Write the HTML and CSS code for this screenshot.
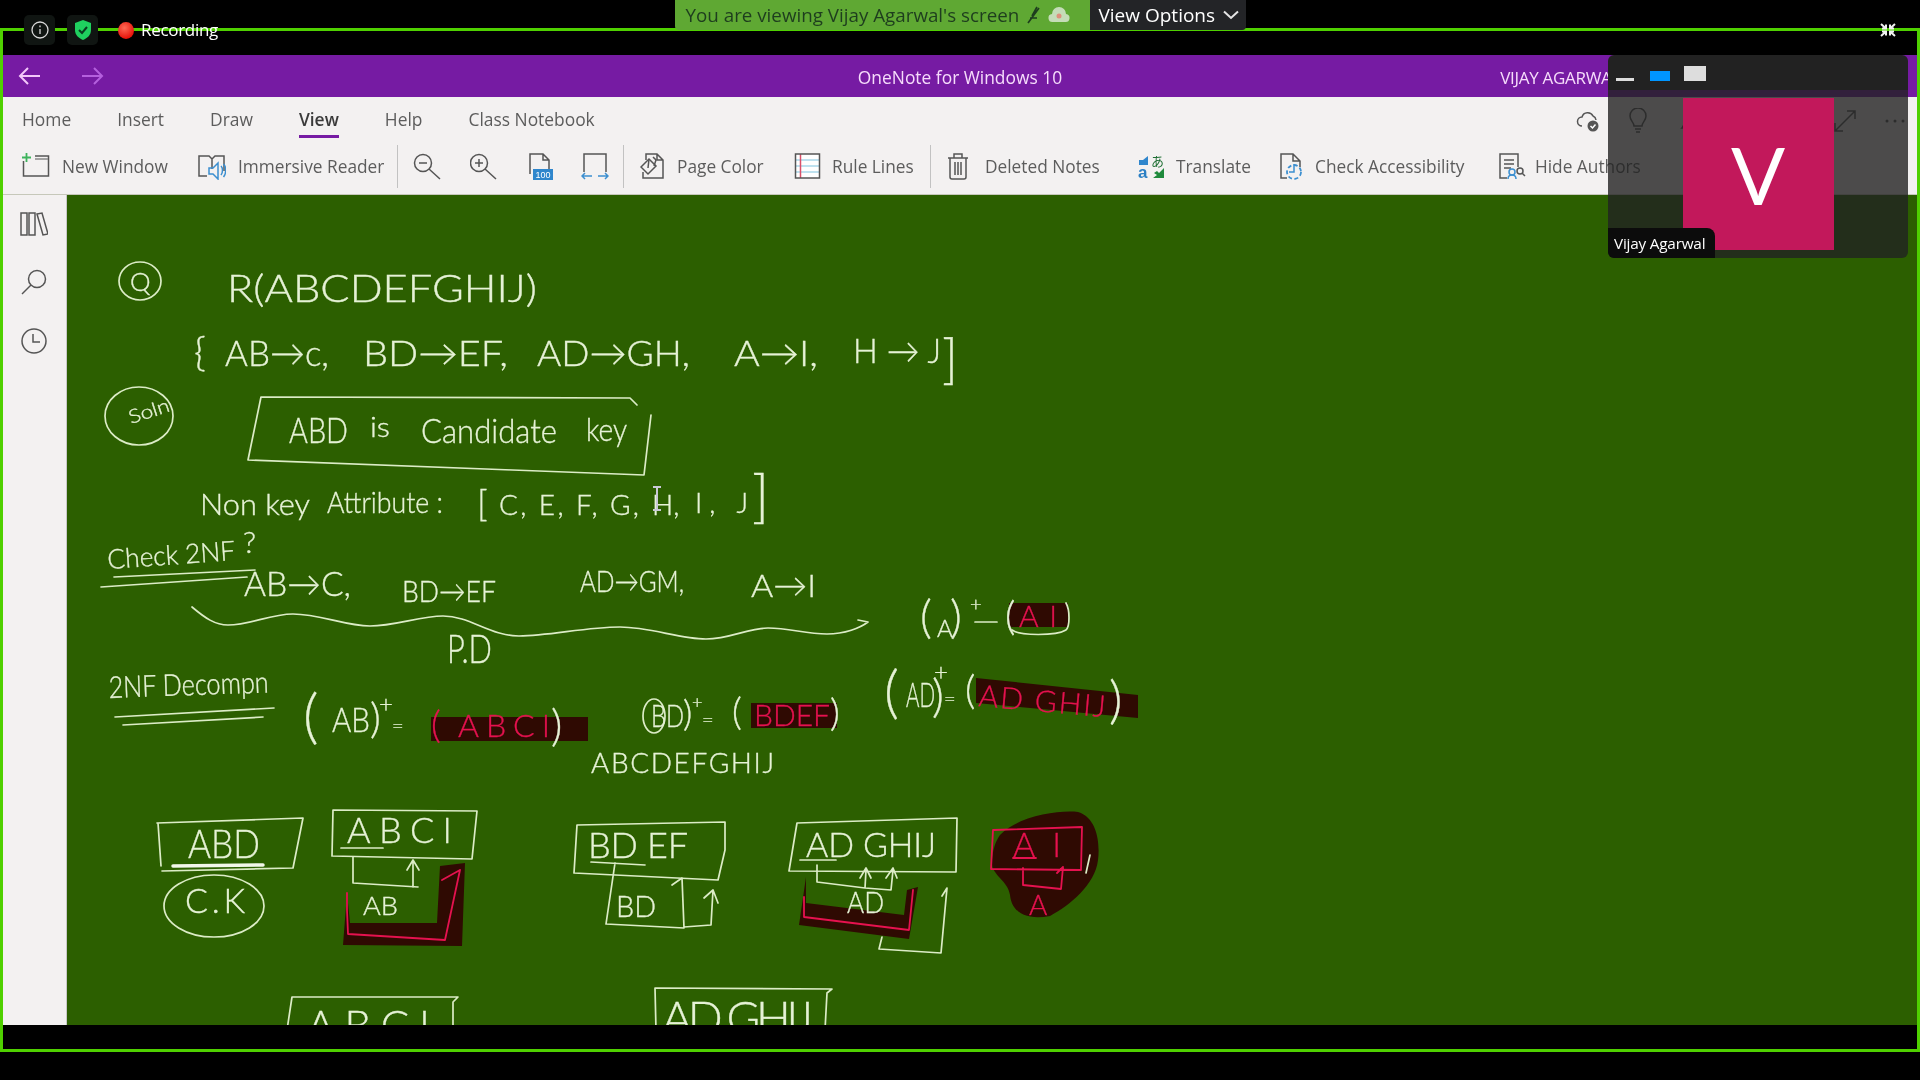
FILE: index.html
```html
<!DOCTYPE html>
<html lang="en">
<head>
<meta charset="utf-8">
<title>OneNote for Windows 10</title>
<link rel="stylesheet" href="styles.css">
</head>
<body>
<div class="page">
  <header class="meeting-bar">
    <div class="meeting-left">
      <span class="chip"><svg width="20" height="20" viewBox="0 0 20 20"><circle class="chip-line" cx="10" cy="10" r="8"/><path class="chip-line" d="M10 9v5M10 5.6v1.6"/></svg></span>
      <span class="chip"><svg width="20" height="22" viewBox="0 0 20 22"><path class="shield" d="M10 1l8 3v7c0 5-3.5 8-8 10-4.500-2-8-5-8-10V4z"/><path class="shield-tick" d="M6 11l3 3 5-6"/></svg></span>
      <span class="rec-dot"></span>
      <span class="rec-label">Recording</span>
    </div>
    <div class="banner">
      <div class="banner-msg">
        <span>You are viewing Vijay Agarwal's screen</span>
        <svg width="15" height="18" viewBox="0 0 15 18"><path class="mic" d="M11 1L6 10M13 2L2 17M4 12h7"/></svg>
        <svg width="22" height="18" viewBox="0 0 22 18"><path class="banner-cloud" d="M5 16a4 4 0 0 1-1-8 7 7 0 0 1 14 0 4 4 0 0 1-1 8z"/><circle class="banner-dot" cx="11" cy="10" r="2.500"/></svg>
      </div>
      <div class="banner-opts">
        <span>View Options</span>
        <svg width="16" height="10" viewBox="0 0 16 10"><path class="chev" d="M1 1.500l7 6.500 7-6.500"/></svg>
      </div>
    </div>
    <div class="meeting-right">
      <svg width="16" height="14" viewBox="0 0 16 14"><path class="exit-fs" d="M1 1l5 4.500M6 1.500v4H2M15 1l-5 4.500M10 1.500v4h4M1 13l5-4.500M6 12.500v-4H2M15 13l-5-4.500M10 12.500v-4h4"/></svg>
    </div>
  </header>

  <div class="app">
    <div class="titlebar">
      <div class="nav">
        <svg width="24" height="20" viewBox="0 0 24 20"><path class="arrow-back" d="M22 10H2M10 2l-8 8 8 8"/></svg>
        <svg width="24" height="20" viewBox="0 0 24 20"><path class="arrow-fwd" d="M2 10h20M14 2l8 8-8 8"/></svg>
      </div>
      <div class="app-title">OneNote for Windows 10</div>
      <div class="user">VIJAY AGARWAL</div>
    </div>

    <div class="ribbon">
      <nav class="tabs">
        <span class="tab">Home</span>
        <span class="tab">Insert</span>
        <span class="tab">Draw</span>
        <span class="tab tab-on">View</span>
        <span class="tab">Help</span>
        <span class="tab">Class Notebook</span>
        <div class="tab-icons">
          <svg width="24" height="24" viewBox="0 0 24 24"><path class="ic" d="M6 17a4.500 4.500 0 0 1 0-9 6 6 0 0 1 11-1 5 5 0 0 1 3 4"/><circle class="ic-solid" cx="17" cy="17" r="5.500"/><path class="ic-white" d="M14.500 17l2 2 3-3.500"/></svg>
          <svg class="ic-bulb" width="18" height="26" viewBox="0 0 18 26"><path class="ic" d="M5 18c0-4-4-5-4-10a8 8 0 0 1 16 0c0 5-4 6-4 10zM6 21h6M7 24h4"/></svg>
          <svg class="ic-bell" width="20" height="26" viewBox="0 0 20 26"><path class="ic" d="M2 20c3-3 2-7 3-11 1-6 9-6 10 0 1 4 0 8 3 11z"/></svg>
          <svg class="ic-expand" width="24" height="24" viewBox="0 0 24 24"><path class="ic" d="M2 22L22 2M14 2h8v8M2 14v8h8"/></svg>
          <svg class="ic-more" width="22" height="6" viewBox="0 0 22 6"><circle class="ic-solid" cx="3" cy="3" r="1.500"/><circle class="ic-solid" cx="11" cy="3" r="1.500"/><circle class="ic-solid" cx="19" cy="3" r="1.500"/></svg>
        </div>
      </nav>

      <div class="tools">
        <div class="tool t-new">
          <svg width="28" height="28" viewBox="0 0 28 28"><path class="ic" d="M1.500 9v15h25V4H13"/><path class="ic-grey" d="M13 7h13"/><path class="ic-green" d="M4.500 1v9M0 5.500h9"/></svg>
          <span class="tool-label">New Window</span>
        </div>
        <div class="tool t-read">
          <svg width="28" height="28" viewBox="0 0 28 28"><path class="ic" d="M9 24H1V4h10l3 3 3-3h9v15M14 7v10"/><path class="ic-blue" d="M11 16h4l5-5v16l-5-5h-4zM23 14c2 2 2 6 0 9M25.500 12c3 3 3 9 0 13"/></svg>
          <span class="tool-label">Immersive Reader</span>
        </div>
        <span class="vsep"></span>
        <div class="tool t-zoomout">
          <svg width="28" height="28" viewBox="0 0 28 28"><circle class="ic" cx="10" cy="11" r="8.500"/><path class="ic" d="M16 17l11 10M6 11h8"/></svg>
        </div>
        <div class="tool t-zoomin">
          <svg width="28" height="28" viewBox="0 0 28 28"><circle class="ic" cx="9" cy="11" r="8.500"/><path class="ic" d="M15 17l11 10M5 11h8M9 7v8"/></svg>
        </div>
        <div class="tool t-hundred">
          <svg width="28" height="28" viewBox="0 0 28 28"><path class="ic" d="M2 22V2h13l6 6v12M15 2v6h6"/><rect class="ic-bluefill" x="5" y="17" width="20" height="11"/><text class="tiny-100" x="15" y="26" text-anchor="middle">100</text></svg>
        </div>
        <div class="tool t-fit">
          <svg width="28" height="28" viewBox="0 0 28 28"><path class="ic" d="M3 20V2h22v18"/><path class="ic-blue" d="M1 24h10M4 21l-3 3 3 3M17 24h10M24 21l3 3-3 3"/></svg>
        </div>
        <span class="vsep"></span>
        <div class="tool t-color">
          <svg width="28" height="28" viewBox="0 0 28 28"><path class="ic" d="M6 8V2h11l6 6v18H3v-6M17 2v6h6"/><path class="ic-fillpaper" d="M1 15l8-8 7 7-8 8z"/><path class="ic" d="M9 7l-1 9M13 5l3 3-2 6"/></svg>
          <span class="tool-label">Page Color</span>
        </div>
        <div class="tool t-rule">
          <svg width="28" height="28" viewBox="0 0 28 28"><rect class="ic-paper" x="1.500" y="2" width="24" height="24"/><path class="ic-cyan" d="M1 8h25M1 14h25M1 20h25"/><path class="ic-red" d="M6.500 2v24"/><rect class="ic" x="1.500" y="2" width="24" height="24"/></svg>
          <span class="tool-label">Rule Lines</span>
        </div>
        <span class="vsep"></span>
        <div class="tool t-trash">
          <svg width="22" height="28" viewBox="0 0 22 28"><path class="ic" d="M1 6h20M7 6V2h8v4M3 6v19a2 2 0 0 0 2 2h12a2 2 0 0 0 2-2V6M8 10v13M11 10v13M14 10v13"/></svg>
          <span class="tool-label">Deleted Notes</span>
        </div>
        <div class="tool t-trans">
          <svg width="28" height="28" viewBox="0 0 28 28"><path class="ic-bluefill" d="M1 8h4l5-4v9H5l-4 0z"/><text class="tiny-a" x="0" y="26">a</text><text class="tiny-ja" x="13" y="14">あ</text><path class="ic-greenfill" d="M26 16v10H15l4-3-3-2 3-2 2 2z"/></svg>
          <span class="tool-label">Translate</span>
        </div>
        <div class="tool t-check">
          <svg width="28" height="28" viewBox="0 0 28 28"><path class="ic" d="M8 26H2V2h12l7 7v6M14 2v7h7"/><circle class="ic-dash" cx="15" cy="20" r="7"/><path class="ic-blue" d="M15 12v8h-5"/></svg>
          <span class="tool-label">Check Accessibility</span>
        </div>
        <div class="tool t-hide">
          <svg width="28" height="28" viewBox="0 0 28 28"><path class="ic" d="M8 26H1V2h18v13M5 8h10M5 12h10M5 16h7"/><circle class="ic-blue" cx="13" cy="20" r="3"/><path class="ic-blue" d="M9 27c0-3 1-4 4-4s4 1 4 4"/><circle class="ic" cx="21" cy="19" r="3"/><path class="ic" d="M23 21l3 3"/></svg>
          <span class="tool-label">Hide Authors</span>
        </div>
      </div>
    </div>

    <main class="workspace">
      <aside class="rail">
        <svg width="28" height="24" viewBox="0 0 28 24"><path class="ic" d="M1 1h6v22H1zM9 1h6v22H9zM17 2l5-1 6 21-5 1z"/></svg>
        <svg width="26" height="26" viewBox="0 0 26 26"><circle class="ic" cx="16" cy="10" r="8.500"/><path class="ic" d="M10 16L1 25"/></svg>
        <svg width="26" height="26" viewBox="0 0 26 26"><circle class="ic" cx="13" cy="13" r="12"/><path class="ic" d="M12 6v8h7"/></svg>
      </aside>
      <section class="canvas">
        <svg class="ink-sheet" width="1850" height="830" viewBox="67 195 1850 830">
          <!-- red highlighter marks -->
          <path class="mark" d="M431 717H588V741H431z"/>
          <path class="mark" d="M751 703H837V728H751z"/>
          <path class="mark" d="M1009 603H1068V627H1009z"/>
          <path class="mark" d="M976 678L1138 695V718L976 703z"/>
          <path class="mark" d="M347 893L343 945L462 946L465 863L440 866L437 923L350 923z"/>
          <path class="mark" d="M806 877L799 925L909 939L918 887L907 890L904 915L806 903z"/>
          <path class="mark" d="M1000 835C1020 815 1060 810 1078 812C1098 818 1100 845 1098 860C1095 885 1070 905 1050 916C1030 920 1012 915 1010 895C1008 880 990 875 992 860C993 850 995 842 1000 835z"/>

          <!-- question header -->
          <ellipse class="ink" cx="140" cy="281" rx="21" ry="19"/>
          <text class="hw" x="130" y="291" font-size="26">Q</text>
          <text class="hw" x="227" y="302" font-size="38" textLength="310" lengthAdjust="spacingAndGlyphs">R(ABCDEFGHIJ)</text>
          <text class="hw" x="194" y="366" font-size="40">{</text>
          <text class="hw" x="225" y="366" font-size="36" textLength="104" lengthAdjust="spacingAndGlyphs">AB→c,</text>
          <text class="hw" x="363" y="366" font-size="36" textLength="145" lengthAdjust="spacingAndGlyphs">BD→EF,</text>
          <text class="hw" x="537" y="366" font-size="36" textLength="153" lengthAdjust="spacingAndGlyphs">AD→GH,</text>
          <text class="hw" x="734" y="366" font-size="36" textLength="84" lengthAdjust="spacingAndGlyphs">A→I,</text>
          <text class="hw" x="853" y="363" font-size="34" textLength="88" lengthAdjust="spacingAndGlyphs">H → J</text>
          <text class="hw" x="942" y="378" font-size="54">]</text>

          <!-- solution -->
          <ellipse class="ink" cx="139" cy="416" rx="34" ry="29"/>
          <text class="hw" x="131" y="424" font-size="19" textLength="42" lengthAdjust="spacingAndGlyphs" transform="rotate(-18 131 424)">Soln</text>
          <path class="ink" d="M248 460L261 397L630 398L637 405M651 415L644 475L248 460"/>
          <text class="hw" x="289" y="443" font-size="36" textLength="59" lengthAdjust="spacingAndGlyphs">ABD</text>
          <text class="hw" x="370" y="437" font-size="28" textLength="20" lengthAdjust="spacingAndGlyphs">is</text>
          <text class="hw" x="421" y="443" font-size="34" textLength="136" lengthAdjust="spacingAndGlyphs">Candidate</text>
          <text class="hw" x="586" y="441" font-size="32" textLength="41" lengthAdjust="spacingAndGlyphs">key</text>
          <text class="hw" x="200" y="515" font-size="30" textLength="110" lengthAdjust="spacingAndGlyphs">Non key</text>
          <text class="hw" x="327" y="513" font-size="30" textLength="116" lengthAdjust="spacingAndGlyphs">Attribute :</text>
          <text class="hw" x="477" y="516" font-size="36">[</text>
          <text class="hw" x="499" y="515" font-size="28" textLength="140">C, E, F, G,</text>
          <text class="hw" x="652" y="515" font-size="28">H,</text>
          <text class="hw" x="695" y="513" font-size="28" textLength="53">I, J</text>
          <text class="hw" x="752" y="516" font-size="58">]</text>
          <path class="cursor" d="M653 487h8M657 487v23M653 510h8"/>

          <!-- check 2NF -->
          <text class="hw" x="108" y="569" font-size="27" textLength="128" lengthAdjust="spacingAndGlyphs" transform="rotate(-4 108 569)">Check 2NF</text>
          <text class="hw" x="243" y="553" font-size="30">?</text>
          <path class="ink" d="M114 577L255 570M101 587L247 577"/>
          <text class="hw" x="244" y="596" font-size="34" textLength="107" lengthAdjust="spacingAndGlyphs">AB→C,</text>
          <text class="hw" x="402" y="602" font-size="30" textLength="94" lengthAdjust="spacingAndGlyphs">BD→EF</text>
          <text class="hw" x="580" y="592" font-size="30" textLength="104" lengthAdjust="spacingAndGlyphs">AD→GM,</text>
          <text class="hw" x="751" y="597" font-size="32" textLength="65" lengthAdjust="spacingAndGlyphs">A→I</text>
          <path class="ink" d="M192 607C205 618 215 625 228 625C250 625 270 614 293 614C320 614 345 626 370 626C395 626 420 616 443 616C470 616 490 636 519 636C550 636 585 627 620 627C650 627 680 639 706 639C730 639 748 628 768 628C790 628 805 634 827 634C845 634 860 628 868 622L858 620"/>
          <text class="hw" x="447" y="663" font-size="40" textLength="45" lengthAdjust="spacingAndGlyphs">P.D</text>

          <!-- 2NF decomposition -->
          <text class="hw" x="109" y="698" font-size="30" textLength="160" lengthAdjust="spacingAndGlyphs" transform="rotate(-2 109 698)">2NF Decompn</text>
          <path class="ink" d="M115 717L274 708M123 725L263 717"/>
          <text class="hw" x="303" y="737" font-size="60">(</text>
          <text class="hw" x="332" y="732" font-size="34" textLength="38" lengthAdjust="spacingAndGlyphs">AB</text>
          <text class="hw" x="370" y="733" font-size="42">)</text>
          <text class="hw" x="379" y="712" font-size="24">+</text>
          <text class="hw" x="392" y="733" font-size="20">=</text>
          <text class="hw-red" x="431" y="738" font-size="38">(</text>
          <text class="hw-red" x="458" y="737" font-size="32" textLength="92">ABCI</text>
          <text class="hw" x="551" y="741" font-size="44">)</text>
          <text class="hw" x="591" y="773" font-size="28" textLength="183" lengthAdjust="spacing">ABCDEFGHIJ</text>

          <ellipse class="ink" cx="654" cy="716" rx="11" ry="17"/>
          <text class="hw" x="651" y="727" font-size="31" textLength="33" lengthAdjust="spacingAndGlyphs">BD</text>
          <text class="hw" x="683" y="726" font-size="36">)</text>
          <text class="hw" x="692" y="708" font-size="18">+</text>
          <text class="hw" x="702" y="727" font-size="20">=</text>
          <text class="hw" x="732" y="725" font-size="38">(</text>
          <text class="hw-red" x="754" y="726" font-size="30" textLength="76" lengthAdjust="spacingAndGlyphs">BDEF</text>
          <text class="hw" x="830" y="726" font-size="38">)</text>

          <text class="hw" x="920" y="633" font-size="46">(</text>
          <text class="hw" x="937" y="637" font-size="24">A</text>
          <text class="hw" x="950" y="633" font-size="46">)</text>
          <text class="hw" x="970" y="611" font-size="20">+</text>
          <path class="ink" d="M975 622H997"/>
          <text class="hw" x="1005" y="630" font-size="40">(</text>
          <text class="hw-red" x="1019" y="627" font-size="30" textLength="38">AI</text>
          <path class="ink" d="M1012 630C1020 636 1056 636 1066 630C1070 626 1070 610 1066 603"/>

          <text class="hw" x="884" y="712" font-size="58">(</text>
          <text class="hw" x="906" y="707" font-size="33" textLength="29" lengthAdjust="spacingAndGlyphs">AD</text>
          <text class="hw" x="932" y="712" font-size="46">)</text>
          <text class="hw" x="934" y="680" font-size="24">+</text>
          <text class="hw" x="944" y="706" font-size="20">=</text>
          <text class="hw" x="965" y="704" font-size="40">(</text>
          <text class="hw-red" x="978" y="706" font-size="30" textLength="127" transform="rotate(5 978 706)">AD GHIJ</text>
          <text class="hw" x="1109" y="718" font-size="52">)</text>

          <!-- ABD relation -->
          <path class="ink" d="M157 823L303 818L293 868L162 871M158 823L161 866"/>
          <text class="hw" x="188" y="858" font-size="40" textLength="72" lengthAdjust="spacingAndGlyphs">ABD</text>
          <path class="ink-thick" d="M173 866L263 865"/>
          <ellipse class="ink" cx="214" cy="906" rx="50" ry="31"/>
          <text class="hw" x="185" y="913" font-size="34" textLength="60">C.K</text>

          <!-- ABCI relation -->
          <path class="ink" d="M333 810L477 811L472 859L332 856z"/>
          <text class="hw" x="347" y="843" font-size="36" textLength="105">ABCI</text>
          <path class="ink" d="M341 848H383M353 857V883L418 887M413 862V887M407 870L413 860L419 870"/>
          <text class="hw" x="363" y="915" font-size="26" textLength="35" lengthAdjust="spacingAndGlyphs">AB</text>
          <path class="pink" d="M347 893V910L348 934L445 940L460 870L442 880"/>

          <!-- BDEF relation -->
          <path class="ink" d="M577 825L725 822L725 850L718 880L574 873L577 825"/>
          <text class="hw" x="588" y="858" font-size="36" textLength="100">BD EF</text>
          <path class="ink" d="M591 862L645 865M615 863L606 924L684 928L682 878L672 885M684 927L711 925L713 890L704 898M713 890L718 903"/>
          <text class="hw" x="616" y="917" font-size="30" textLength="40" lengthAdjust="spacingAndGlyphs">BD</text>

          <!-- ADGHIJ relation -->
          <path class="ink" d="M797 823L957 818L956 872L789 871L797 823"/>
          <text class="hw" x="806" y="857" font-size="34" textLength="130">AD GHIJ</text>
          <path class="ink" d="M800 860H836M817 865V882L865 888L866 870M860 878L866 868L871 878M865 888L891 890L893 870M886 878L893 868L897 878"/>
          <path class="pink" d="M804 897V917L909 930L913 890"/>
          <text class="hw" x="847" y="913" font-size="30" textLength="37" lengthAdjust="spacingAndGlyphs">AD</text>
          <path class="ink" d="M882 937L879 949L941 953L947 888L942 896"/>

          <!-- AI relation -->
          <path class="pink" d="M993 830L1082 827L1081 870L991 869zM1013 858H1036M1023 868V885L1061 889L1063 867L1057 873"/>
          <text class="hw-red" x="1013" y="857" font-size="34" textLength="48">AI</text>
          <text class="hw-red" x="1029" y="915" font-size="28">A</text>
          <path class="ink" d="M1090 855L1086 873"/>

          <!-- next page, cut off by the canvas -->
          <path class="ink" d="M287 1030L292 997L458 997L453 1002V1030"/>
          <text class="hw" x="307" y="1040" font-size="42" textLength="123">ABCI</text>
          <path class="ink" d="M656 1030L655 988L832 989L827 993L825 1030"/>
          <text class="hw" x="662" y="1034" font-size="46" textLength="151">AD GHIJ</text>
        </svg>
      </section>
    </main>
  </div>
</div>

<div class="frame"></div>

<aside class="video-panel">
  <div class="video-head">
    <span class="vh-min"></span>
    <span class="vh-blue"></span>
    <span class="vh-white"></span>
  </div>
  <div class="video-body">
    <div class="video-tile">V</div>
    <div class="video-name">Vijay Agarwal</div>
  </div>
</aside>
</body>
</html>
```
FILE: styles.css
```css
* { box-sizing: border-box; }
html, body { margin: 0; height: 100%; background: #000; overflow: hidden; }
body { font-family: "Open Sans", "Noto Sans", sans-serif; position: relative; width: 1920px; height: 1080px; filter: blur(0.45px); }

.page { width: 1920px; height: 1080px; display: flex; flex-direction: column; background: #000; }

/* Meeting bar */
.meeting-bar { height: 55px; flex: none; display: grid; grid-template-columns: 1fr auto 1fr; align-items: start; position: relative; z-index: 5; }
.meeting-left { display: flex; align-items: center; padding: 15px 0 0 24px; gap: 12px; }
.chip { width: 31px; height: 30px; border-radius: 5px; background: #101512; display: flex; align-items: center; justify-content: center; }
.chip-line { fill: none; stroke: #d8d8d8; stroke-width: 1.300; }
.shield { fill: #1fd05f; }
.shield-tick { fill: none; stroke: #0a3c20; stroke-width: 2; }
.rec-dot { width: 16px; height: 17px; border-radius: 50%; background: radial-gradient(circle at 40% 35%, #ff6a55, #e8150c 70%); margin-left: 8px; }
.rec-label { font-size: 17px; color: #fff; margin-left: -5px; line-height: 28px; letter-spacing: -0.3px; }

.banner { display: flex; height: 30px; }
.banner-msg { width: 415px; background: #5fa833; border-radius: 0 0 0 4px; color: #1e3d1e; font-size: 18.800px; display: flex; align-items: center; gap: 7px; padding-left: 11px; line-height: 30px; white-space: nowrap; }
.mic { fill: none; stroke: #1e3d1e; stroke-width: 1.700; }
.banner-cloud { fill: #c5dcb8; }
.banner-dot { fill: #de8f7c; }
.banner-opts { width: 156px; background: #232427; border-radius: 0 0 4px 0; color: #fff; font-size: 19px; display: flex; align-items: center; gap: 8px; padding-left: 9px; white-space: nowrap; }
.chev { fill: none; stroke: #e4e4e4; stroke-width: 2; }

.meeting-right { display: flex; justify-content: flex-end; padding: 23px 24px 0 0; }
.exit-fs { fill: none; stroke: #f2f2f2; stroke-width: 2; }

/* App window */
.app { margin: 0 3px; display: flex; flex-direction: column; flex: none; }
.titlebar { height: 42px; background: #761ba3; display: grid; grid-template-columns: 1fr auto 1fr; align-items: center; padding-top: 2px; }
.nav { display: flex; padding-left: 15px; gap: 38px; margin-top: -2px; }
.arrow-back { fill: none; stroke: #f3c8fa; stroke-width: 2; }
.arrow-fwd { fill: none; stroke: #b560de; stroke-width: 2; }
.app-title { color: #f6dcfb; font-size: 17.400px; }
.user { color: #f6dcfb; font-size: 17px; margin-left: 438px; white-space: nowrap; letter-spacing: -0.3px; }

.ribbon { background: #f3f1f1; height: 98px; border-bottom: 1px solid #c6c8ba; }
.tabs { height: 48px; display: flex; align-items: flex-start; padding: 10px 0 0 19px; gap: 46px; position: relative; }
.tab { font-size: 17.400px; line-height: 24px; color: #5c5c5c; padding-bottom: 4px; border-bottom: 3px solid transparent; white-space: nowrap; }
.tab-on { color: #3a3a3a; font-weight: 600; border-bottom-color: #761ba3; }
.tab-icons { position: absolute; top: 0; right: 0; height: 48px; width: 341px; display: flex; align-items: center; }
.ic-bulb { margin-left: 29px; }
.ic-bell { margin-left: 33px; }
.ic-expand { margin-left: 133px; }
.ic-more { margin-left: 27px; }

.tools { display: flex; align-items: center; height: 42px; padding-left: 19px; }
.tool { display: flex; align-items: center; gap: 12px; flex: none; }
.tool svg { flex: none; }
.tool-label { font-size: 17.300px; color: #5c5c5c; white-space: nowrap; display: block; }
.vsep { width: 1px; height: 43px; background: #c2c2c2; flex: none; }

.t-new .tool-label { width: 108px; }
.t-read .tool-label { width: 143px; }
.t-color .tool-label { width: 87px; }
.t-rule .tool-label { width: 80px; }
.t-trash .tool-label { width: 115px; }
.t-trans .tool-label { width: 71px; }
.t-check .tool-label { width: 151px; }
.t-hide .tool-label { width: 105px; }

.t-read { margin-left: 28px; }
.t-read + .vsep { margin-left: 16px; }
.t-zoomout { margin-left: 15px; }
.t-zoomin { margin-left: 29px; }
.t-hundred { margin-left: 30px; }
.t-fit { margin-left: 25px; }
.t-fit + .vsep { margin-left: 14px; }
.t-color { margin-left: 16px; gap: 9px; }
.t-rule { margin-left: 30px; gap: 10px; }
.t-rule + .vsep { margin-left: 18px; }
.t-trash { margin-left: 16px; gap: 16px; }
.t-trans { margin-left: 38px; gap: 10px; }
.t-check { margin-left: 32px; gap: 8px; }
.t-hide { margin-left: 33px; gap: 8px; }

.ic { fill: none; stroke: #555; stroke-width: 1.500; }
.ic-fillpaper { fill: #f3f1f1; stroke: #555; stroke-width: 1.500; }
.ic-grey { fill: none; stroke: #888; stroke-width: 1.500; }
.ic-green { fill: none; stroke: #3db35c; stroke-width: 1.800; }
.ic-blue { fill: none; stroke: #3c8fd0; stroke-width: 1.500; }
.ic-bluefill { fill: #2f86cc; }
.ic-greenfill { fill: #1f8a3c; }
.ic-cyan { fill: none; stroke: #a9d8ea; stroke-width: 1.500; }
.ic-red { fill: none; stroke: #d9506a; stroke-width: 1.500; }
.ic-paper { fill: #fff; }
.ic-solid { fill: #555; }
.ic-white { fill: none; stroke: #fff; stroke-width: 1.500; }
.ic-dash { fill: #f3f1f1; stroke: #3c8fd0; stroke-width: 1.800; stroke-dasharray: 4 2.500; }
.tiny-100 { font-family: "Liberation Sans", sans-serif; font-size: 9px; fill: #fff; }
.tiny-a { font-family: "Liberation Sans", sans-serif; font-size: 17px; font-weight: 700; fill: #2a7fc4; }
.tiny-ja { font-family: "Noto Sans CJK JP", sans-serif; font-size: 13px; fill: #1f6f34; }

/* Workspace */
.workspace { display: flex; height: 830px; }
.rail { width: 64px; flex: none; background: #f3f1f1; border-right: 1px solid #c8c8c8; display: flex; flex-direction: column; align-items: center; padding: 17px 2px 0 0; gap: 33px; }
.canvas { flex: 1; background: #2c5f00; overflow: hidden; }
.ink-sheet { display: block; }

.hw, .hw-red { font-family: "Lato", "DejaVu Sans", sans-serif; font-weight: 300; stroke-width: 0.350; }
.hw { fill: #e6f2d6; stroke: #e6f2d6; }
.hw-red { fill: #e5124f; stroke: #e5124f; }
.ink { fill: none; stroke: #dcecc6; stroke-width: 1.700; stroke-linejoin: round; stroke-linecap: round; }
.ink-thick { fill: none; stroke: #f2f7ea; stroke-width: 3.500; stroke-linecap: round; }
.pink { fill: none; stroke: #e5124f; stroke-width: 1.800; stroke-linejoin: round; stroke-linecap: round; }
.mark { fill: #2f0a02; }
.cursor { fill: none; stroke: #c9c9d6; stroke-width: 2; }

/* Green share frame */
.frame { position: absolute; left: 0; top: 28px; width: 1920px; height: 1024px; border: 3px solid #4fd000; z-index: 2; pointer-events: none; }

/* Floating video panel */
.video-panel { position: absolute; left: 1608px; top: 55px; width: 300px; height: 203px; border-radius: 6px; overflow: hidden; z-index: 4; display: flex; flex-direction: column; }
.video-head { height: 35px; flex: none; background: #222; display: flex; align-items: flex-end; padding: 0 0 9px 8px; }
.vh-min { width: 18px; height: 3px; background: #ddd; }
.vh-blue { width: 20px; height: 10px; background: #0095ff; margin-left: 16px; }
.vh-white { width: 22px; height: 15px; background: #ddd; margin-left: 14px; }
.video-body { flex: 1; position: relative; background: rgba(34, 34, 34, 0.8); display: flex; justify-content: center; padding: 8px 0 8px 0; }
.video-tile { width: 151px; height: 152px; background: #c2185b; color: #fff; font-family: "Lato", sans-serif; font-size: 80px; display: flex; align-items: center; justify-content: center; }
.video-name { position: absolute; left: 0; bottom: 0; width: 107px; height: 30px; background: #0c0c0c; border-top-right-radius: 8px; color: #fff; font-size: 15.300px; line-height: 30px; padding-left: 6px; white-space: nowrap; letter-spacing: -0.2px; }
```
